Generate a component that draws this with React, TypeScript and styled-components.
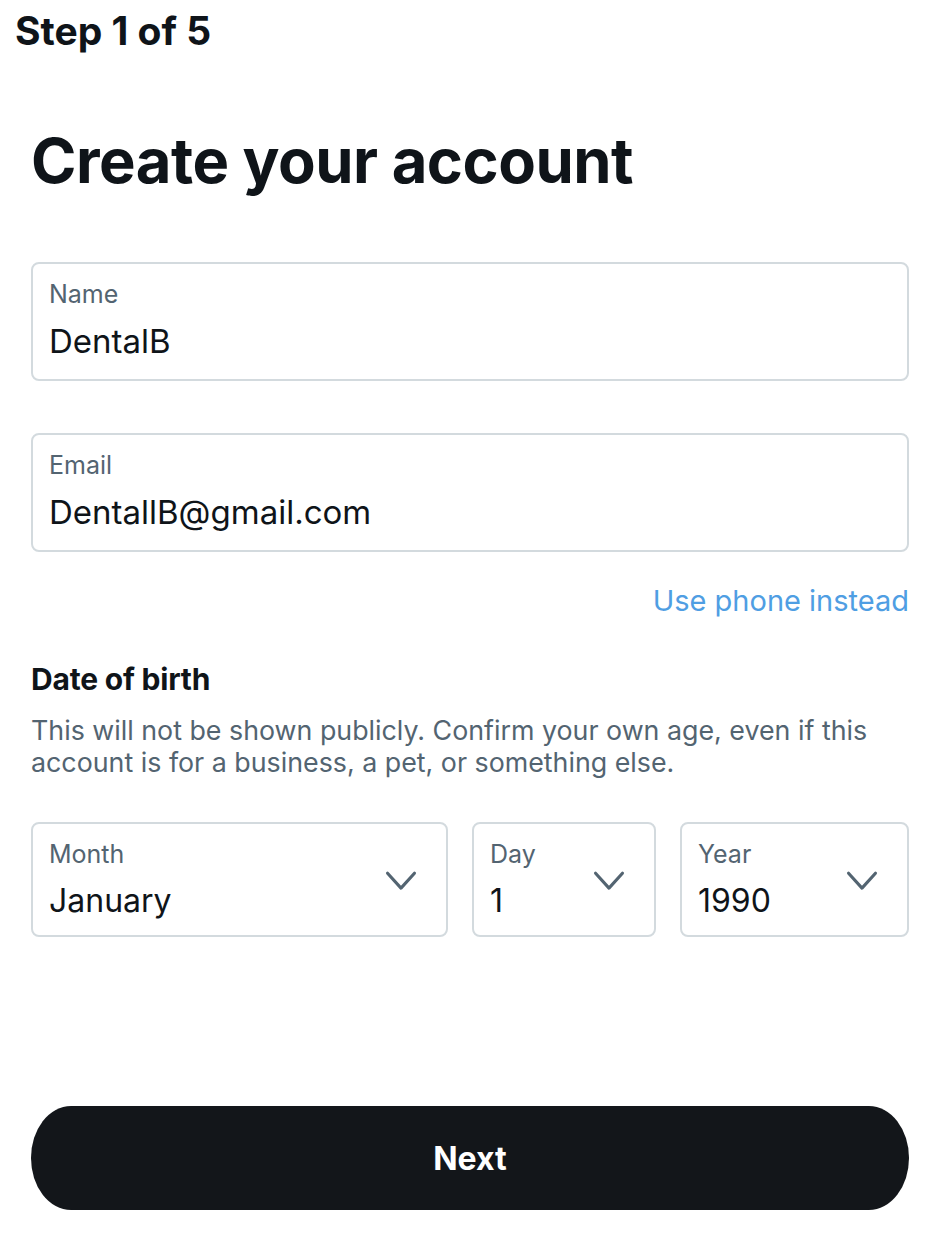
import React from "react";
import styled, { createGlobalStyle } from "styled-components";

const Global = createGlobalStyle`
  html, body { margin: 0; padding: 0; background: #ffffff; }
  body { font-family: Inter, "Noto Sans", sans-serif; color: #0f1419; }
`;

const Page = styled.div`
  width: 940px;
  height: 1236px;
  box-sizing: border-box;
  display: flex;
  flex-direction: column;
  padding: 0 31px 26px 31px;
`;

const StepTitle = styled.div`
  font-size: 39px;
  font-weight: 700;
  letter-spacing: 0;
  margin: 7px 0 0 -16px;
  line-height: 48px;
`;

const Heading = styled.h1`
  margin: 70px 0 0 0;
  font-size: 61.5px;
  font-weight: 700;
  line-height: 72px;
  letter-spacing: -0.5px;
`;

const Field = styled.div<{ $h?: number }>`
  box-sizing: border-box;
  border: 2px solid #d3dade;
  border-radius: 8px;
  height: ${(p) => p.$h ?? 119}px;
  padding: 15px 16px 0 16px;
  display: flex;
  align-items: flex-start;
  justify-content: space-between;
`;

const FieldText = styled.div`
  display: flex;
  flex-direction: column;
`;

const Label = styled.div`
  font-size: 25px;
  line-height: 30px;
  color: #536471;
`;

const Value = styled.div<{ $size?: number }>`
  font-size: ${(p) => p.$size ?? 33}px;
  line-height: 42px;
  color: #0f1419;
  margin-top: 11px;
`;

const NameField = styled(Field)`
  margin-top: 65px;
`;

const EmailField = styled(Field)`
  margin-top: 52px;
`;

const LinkRow = styled.div`
  display: flex;
  justify-content: flex-end;
  margin-top: 30px;
`;

const Link = styled.a`
  font-size: 29px;
  line-height: 38px;
  color: #4f9ee3;
  text-decoration: none;
`;

const SubHeading = styled.div`
  margin-top: 42px;
  font-size: 30px;
  font-weight: 700;
  line-height: 34px;
  letter-spacing: -0.2px;
`;

const Description = styled.p`
  margin: 18px 0 0 0;
  font-size: 26.8px;
  line-height: 32px;
  color: #536471;
`;

const SelectRow = styled.div`
  display: grid;
  grid-template-columns: 417px 184px 229px;
  justify-content: space-between;
  margin-top: 44px;
`;

const Chevron = styled.svg`
  width: 34px;
  height: 34px;
  margin-top: 25px;
  margin-right: 12px;
  flex-shrink: 0;
`;

const Spacer = styled.div`
  flex: 1;
`;

const NextButton = styled.button`
  height: 104px;
  width: 100%;
  border: none;
  border-radius: 40px / 52px;
  background: #13161a;
  color: #ffffff;
  font-family: Inter, "Noto Sans", sans-serif;
  font-size: 32px;
  font-weight: 700;
  cursor: pointer;
`;

const ChevronIcon = () => (
  <Chevron viewBox="0 0 24 24" fill="none">
    <path d="M2.5 6.5 L12 17 L21.5 6.5" stroke="#536471" strokeWidth="2.2" strokeLinecap="round" strokeLinejoin="round" />
  </Chevron>
);

const SelectBox = ({ label, value }: { label: string; value: string }) => (
  <Field $h={115}>
    <FieldText>
      <Label>{label}</Label>
      <Value $size={32}>{value}</Value>
    </FieldText>
    <ChevronIcon />
  </Field>
);

export default function App() {
  return (
    <>
      <Global />
      <Page>
        <StepTitle>Step 1 of 5</StepTitle>
        <Heading>Create your account</Heading>
        <NameField>
          <FieldText>
            <Label>Name</Label>
            <Value>DentalB</Value>
          </FieldText>
        </NameField>
        <EmailField>
          <FieldText>
            <Label>Email</Label>
            <Value>DentallB@gmail.com</Value>
          </FieldText>
        </EmailField>
        <LinkRow>
          <Link href="#">Use phone instead</Link>
        </LinkRow>
        <SubHeading>Date of birth</SubHeading>
        <Description>
          This will not be shown publicly. Confirm your own age, even if this account is for a business, a pet, or something else.
        </Description>
        <SelectRow>
          <SelectBox label="Month" value="January" />
          <SelectBox label="Day" value="1" />
          <SelectBox label="Year" value="1990" />
        </SelectRow>
        <Spacer />
        <NextButton>Next</NextButton>
      </Page>
    </>
  );
}
